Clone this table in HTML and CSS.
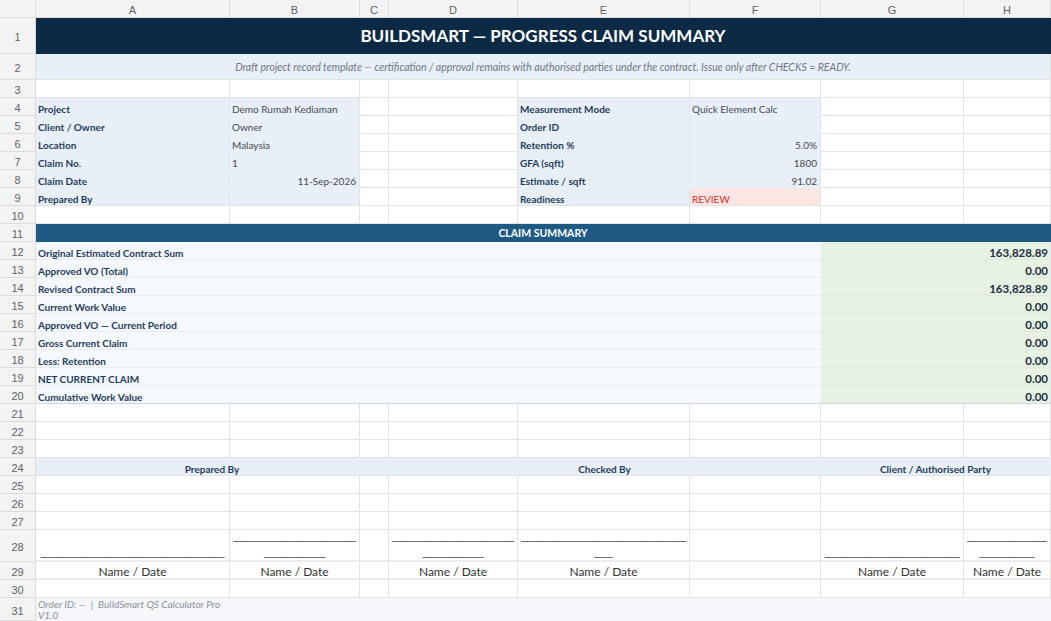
FILE: index.html
```html
<!DOCTYPE html>
<html>
<head>
<meta charset="utf-8">
<link rel="stylesheet" href="styles.css">
</head>
<body>
<div class="sheet">
  <!-- header row -->
  <div class="hd corner"></div>
  <div class="hd col">A</div><div class="hd col">B</div><div class="hd col">C</div><div class="hd col">D</div>
  <div class="hd col">E</div><div class="hd col">F</div><div class="hd col">G</div><div class="hd col">H</div>

  <!-- 1 -->
  <div class="hd rn">1</div>
  <div class="c title span8">BUILDSMART — PROGRESS CLAIM SUMMARY</div>
  <!-- 2 -->
  <div class="hd rn">2</div>
  <div class="c note span8">Draft project record template — certification / approval remains with authorised parties under the contract. Issue only after CHECKS = READY.</div>
  <!-- 3 -->
  <div class="hd rn">3</div>
  <div class="c"></div><div class="c"></div><div class="c"></div><div class="c"></div><div class="c"></div><div class="c"></div><div class="c"></div><div class="c"></div>

  <!-- 4 -->
  <div class="hd rn">4</div>
  <div class="c info lbl">Project</div><div class="c info val">Demo Rumah Kediaman</div>
  <div class="c"></div><div class="c"></div>
  <div class="c info lbl">Measurement Mode</div><div class="c info val">Quick Element Calc</div>
  <div class="c"></div><div class="c"></div>
  <!-- 5 -->
  <div class="hd rn">5</div>
  <div class="c info lbl">Client / Owner</div><div class="c info val">Owner</div>
  <div class="c"></div><div class="c"></div>
  <div class="c info lbl">Order ID</div><div class="c info val"></div>
  <div class="c"></div><div class="c"></div>
  <!-- 6 -->
  <div class="hd rn">6</div>
  <div class="c info lbl">Location</div><div class="c info val">Malaysia</div>
  <div class="c"></div><div class="c"></div>
  <div class="c info lbl">Retention %</div><div class="c info val num">5.0%</div>
  <div class="c"></div><div class="c"></div>
  <!-- 7 -->
  <div class="hd rn">7</div>
  <div class="c info lbl">Claim No.</div><div class="c info val">1</div>
  <div class="c"></div><div class="c"></div>
  <div class="c info lbl">GFA (sqft)</div><div class="c info val num">1800</div>
  <div class="c"></div><div class="c"></div>
  <!-- 8 -->
  <div class="hd rn">8</div>
  <div class="c info lbl">Claim Date</div><div class="c info val num">11-Sep-2026</div>
  <div class="c"></div><div class="c"></div>
  <div class="c info lbl">Estimate / sqft</div><div class="c info val num">91.02</div>
  <div class="c"></div><div class="c"></div>
  <!-- 9 -->
  <div class="hd rn">9</div>
  <div class="c info last lbl">Prepared By</div><div class="c info last val"></div>
  <div class="c"></div><div class="c"></div>
  <div class="c info last lbl">Readiness</div><div class="c info last val review">REVIEW</div>
  <div class="c"></div><div class="c"></div>
  <!-- 10 -->
  <div class="hd rn">10</div>
  <div class="c"></div><div class="c"></div><div class="c"></div><div class="c"></div><div class="c"></div><div class="c"></div><div class="c"></div><div class="c"></div>

  <!-- 11 -->
  <div class="hd rn">11</div>
  <div class="c bar span8">CLAIM SUMMARY</div>

  <!-- 12-20 -->
  <div class="hd rn">12</div><div class="c sl span6">Original Estimated Contract Sum</div><div class="c sv span2">163,828.89</div>
  <div class="hd rn">13</div><div class="c sl span6">Approved VO (Total)</div><div class="c sv span2">0.00</div>
  <div class="hd rn">14</div><div class="c sl span6">Revised Contract Sum</div><div class="c sv span2">163,828.89</div>
  <div class="hd rn">15</div><div class="c sl span6">Current Work Value</div><div class="c sv span2">0.00</div>
  <div class="hd rn">16</div><div class="c sl span6">Approved VO — Current Period</div><div class="c sv span2">0.00</div>
  <div class="hd rn">17</div><div class="c sl span6">Gross Current Claim</div><div class="c sv span2">0.00</div>
  <div class="hd rn">18</div><div class="c sl span6">Less: Retention</div><div class="c sv span2">0.00</div>
  <div class="hd rn">19</div><div class="c sl span6">NET CURRENT CLAIM</div><div class="c sv span2">0.00</div>
  <div class="hd rn">20</div><div class="c sl span6 lastrow">Cumulative Work Value</div><div class="c sv span2 lastrow">0.00</div>

  <!-- 21-23 -->
  <div class="hd rn">21</div>
  <div class="c"></div><div class="c"></div><div class="c"></div><div class="c"></div><div class="c"></div><div class="c"></div><div class="c"></div><div class="c"></div>
  <div class="hd rn">22</div>
  <div class="c"></div><div class="c"></div><div class="c"></div><div class="c"></div><div class="c"></div><div class="c"></div><div class="c"></div><div class="c"></div>
  <div class="hd rn">23</div>
  <div class="c"></div><div class="c"></div><div class="c"></div><div class="c"></div><div class="c"></div><div class="c"></div><div class="c"></div><div class="c"></div>

  <!-- 24 -->
  <div class="hd rn">24</div>
  <div class="c sig span3">Prepared By</div>
  <div class="c sig span3">Checked By</div>
  <div class="c sig span2">Client / Authorised Party</div>

  <!-- 25-27 -->
  <div class="hd rn">25</div>
  <div class="c"></div><div class="c"></div><div class="c"></div><div class="c"></div><div class="c"></div><div class="c"></div><div class="c"></div><div class="c"></div>
  <div class="hd rn">26</div>
  <div class="c"></div><div class="c"></div><div class="c"></div><div class="c"></div><div class="c"></div><div class="c"></div><div class="c"></div><div class="c"></div>
  <div class="hd rn">27</div>
  <div class="c"></div><div class="c"></div><div class="c"></div><div class="c"></div><div class="c"></div><div class="c"></div><div class="c"></div><div class="c"></div>

  <!-- 28 -->
  <div class="hd rn">28</div>
  <div class="c line">______________________________</div>
  <div class="c line">______________________________</div>
  <div class="c line"></div>
  <div class="c line">______________________________</div>
  <div class="c line">______________________________</div>
  <div class="c line"></div>
  <div class="c line">______________________</div>
  <div class="c line">______________________</div>

  <!-- 29 -->
  <div class="hd rn">29</div>
  <div class="c nd">Name / Date</div>
  <div class="c nd">Name / Date</div>
  <div class="c nd"></div>
  <div class="c nd">Name / Date</div>
  <div class="c nd">Name / Date</div>
  <div class="c nd"></div>
  <div class="c nd">Name / Date</div>
  <div class="c nd">Name / Date</div>

  <!-- 30 -->
  <div class="hd rn">30</div>
  <div class="c"></div><div class="c"></div><div class="c"></div><div class="c"></div><div class="c"></div><div class="c"></div><div class="c"></div><div class="c"></div>

  <!-- 31 -->
  <div class="hd rn">31</div>
  <div class="c foot span8"><div class="foot-text">Order ID: —  |  BuildSmart QS Calculator Pro V1.0</div></div>
</div>
</body>
</html>
```

FILE: styles.css
```css
html, body {
  margin: 0;
  padding: 0;
  background: #ffffff;
  overflow: hidden;
}

.sheet {
  display: grid;
  grid-template-columns: 36px 194px 130px 29px 129px 172px 131px 143px 87px;
  grid-template-rows: 18px 36px 26px 18px repeat(6, 18px) 18px 18px repeat(9, 18px) repeat(7, 18px) 32px 18px 18px 23px;
  width: 1051px;
  height: 621px;
  font-family: Lato, "Open Sans", sans-serif;
  font-size: 10px;
  color: #3c4043;
}

.sheet > div {
  box-sizing: border-box;
  min-width: 0;
  overflow: hidden;
  white-space: nowrap;
}

.hd {
  background: #f3f3f3;
  color: #5f6368;
  font-family: "Liberation Sans", Arial, sans-serif;
  font-size: 11px;
  display: flex;
  align-items: center;
  justify-content: center;
  border-right: 1px solid #dcdcdc;
  border-bottom: 1px solid #dcdcdc;
}

.hd.col {
  padding-top: 2px;
}

.hd.rn {
  padding-top: 3px;
}

.c {
  border-right: 1px solid #e3e3e3;
  border-bottom: 1px solid #e3e3e3;
  display: flex;
  align-items: center;
  padding: 4px 2px 0 2px;
}

.span8 { grid-column: span 8; }
.span6 { grid-column: span 6; }
.span3 { grid-column: span 3; }
.span2 { grid-column: span 2; }

.title {
  background: #0c2a44;
  border-color: #0c2a44;
  color: #ffffff;
  font-weight: 700;
  font-size: 17px;
  justify-content: center;
  padding: 0 2px;
}

.note {
  background: #e8eff7;
  color: #6e7684;
  font-style: italic;
  font-size: 10.5px;
  justify-content: center;
  padding: 0 2px;
}

.info {
  background: #e9eff6;
  border-bottom-color: transparent;
  border-right-color: #dfe5ec;
}

.info.last {
  border-bottom-color: #e3e3e3;
}

.lbl {
  color: #1f3d5e;
  font-weight: 700;
}

.val {
  color: #444a52;
}

.num {
  justify-content: flex-end;
  padding-right: 3px;
}

.review {
  background: #fce6e4;
  color: #d93025;
}

.bar {
  background: #1f5a85;
  border-color: #1f5a85;
  color: #ffffff;
  font-weight: 700;
  font-size: 10.5px;
  justify-content: center;
  padding-top: 1px;
}

.sl {
  background: #f5f8fc;
  color: #1f3d5e;
  font-weight: 700;
  border-bottom-color: #eaeef3;
  border-right-color: transparent;
}

.sv {
  background: #e7f2e2;
  color: #1b2f45;
  font-weight: 700;
  font-size: 11.5px;
  justify-content: flex-end;
  padding-right: 2px;
  border-bottom-color: #e0e9dc;
}

.lastrow {
  border-bottom-color: #cfd8e2;
}

.sig {
  background: #e8eff7;
  color: #1f3d5e;
  font-weight: 700;
  font-size: 10px;
  justify-content: center;
  border-right-color: transparent;
}

.line {
  white-space: normal !important;
  word-break: break-all;
  text-align: center;
  justify-content: center;
  align-items: flex-end;
  font-family: "Liberation Sans", Arial, sans-serif;
  font-size: 11px;
  line-height: 16px;
  color: #444;
  padding: 0 2px 0 2px;
  border-bottom: 2px solid #ececec;
}

.nd {
  justify-content: center;
  font-size: 12px;
  color: #333;
  padding-top: 2px;
  border-bottom: 2px solid #ececec;
}

.foot {
  background: #f5f7fa;
  border-color: transparent;
  align-items: flex-start;
  padding: 1px 2px 0 2px;
}

.foot-text {
  width: 186px;
  white-space: pre-wrap;
  font-style: italic;
  font-size: 10px;
  line-height: 11px;
  color: #8a929d;
}
```
